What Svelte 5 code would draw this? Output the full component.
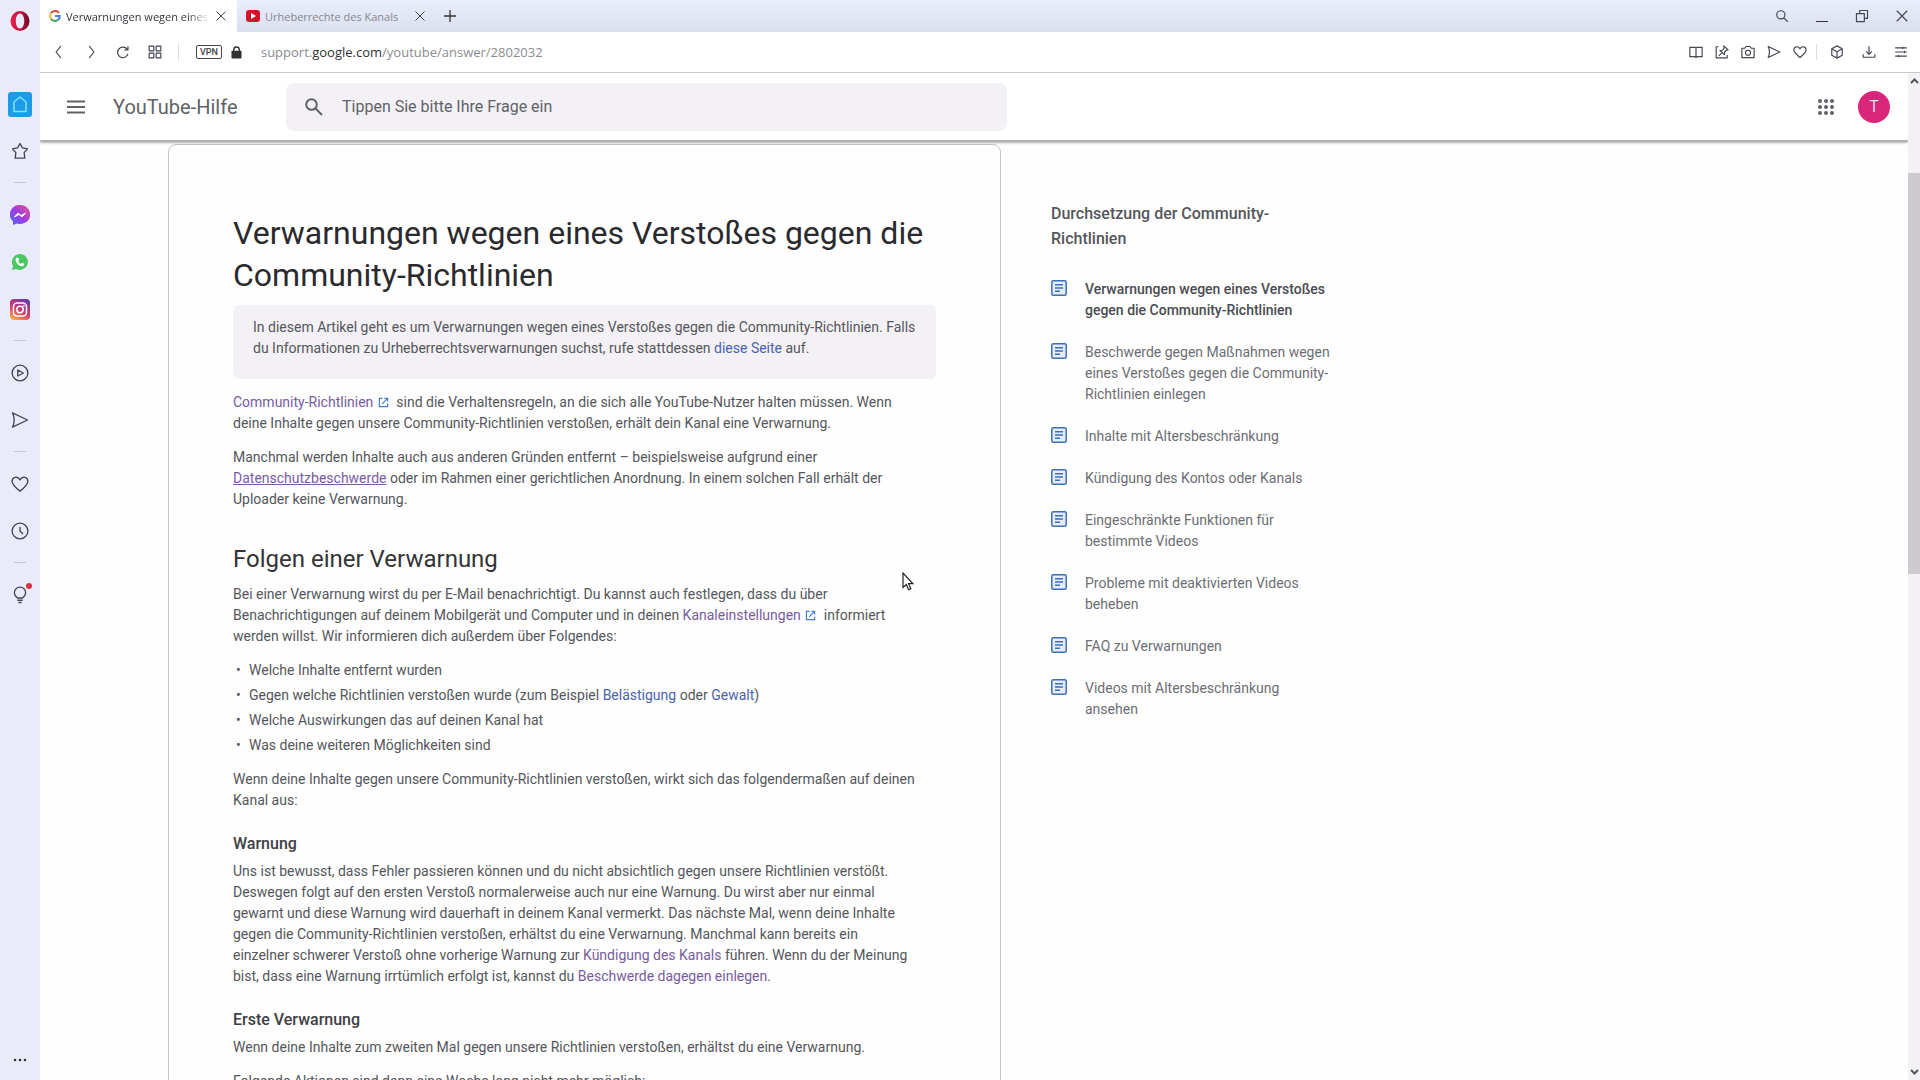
<script lang="ts">
  type IconName = keyof typeof ICONS;

  // 24x24 stroke icons shared by the browser toolbar and the sidebar
  const ICONS = {
    back: 'M15 2l-8 10 8 10',
    forward: 'M9 2l8 10-8 10',
    reload: 'M19.5 8A9 9 0 1 0 20.5 15M20.5 2v6.500h-6.500',
    tiles: 'M2 2h8v8H2zM14 2h8v8h-8zM2 14h8v8H2zM14 14h8v8h-8z',
    search: 'M10 3a7 7 0 1 1 0 14 7 7 0 0 1 0-14zM15 15l7 7',
    restore: 'M2.500 8h13.500v13.500H2.500zM8 8V2.500h13.500V16H16',
    close: 'M3 3l18 18M21 3L3 21',
    book: 'M12 4H1.500v16H10l2 1.500 2-1.500h8.500V4zM12 4v16',
    pin: 'M6 3H2v19h19v-5M15 1.500l7.500 7-3 .500-3 3-.500 4.500L8.500 9.500l4.500-.500 2.500-4zM12 13l-5.500 5.500',
    camera: 'M1.500 5.500h5L8.500 2.500h7l2 3h5v16h-21zM12 9a4.300 4.300 0 1 1 0 8.600A4.300 4.300 0 0 1 12 9z',
    send: 'M2 2.500L22 12 2 21.500Q6.500 12 2 2.500z',
    heart: 'M12 21.500C5 16 1.500 12.500 1.500 8.300 1.500 2.500 9 1 12 6.500 15 1 22.500 2.500 22.500 8.300 22.500 12.500 19 16 12 21.500z',
    cube: 'M12 1.500l9 5v11l-9 5-9-5v-11zM3 6.500l9 5 9-5M12 11.500v11',
    download: 'M12 2v14M7 11l5 5 5-5M2 16v5h20v-5',
    sliders: 'M2 5h20M2 12h20M2 19h20M15 3v4M18 10v4M8 17v4',
    star: 'M12 2l3.300 5.800 6.700 1.400-4.500 5 1 7.300H5.500l1-7.300-4.500-5 6.700-1.400z',
    play: 'M12 1.500a10.500 10.500 0 1 1 0 21 10.500 10.500 0 0 1 0-21zM9 8l7.500 4L9 16z',
    clock: 'M12 1.500a10.500 10.500 0 1 1 0 21 10.500 10.500 0 0 1 0-21zM12 6.500V12l4 4',
    bulb: 'M8.500 16C6 14 4.500 12 4.500 9a7.500 7.500 0 0 1 15 0c0 3-1.500 5-4 7zM8.500 19h7M10 22h4',
  };

  const navIcons: [IconName, string][] = [
    ['back', 'Zurück'],
    ['forward', 'Vorwärts'],
    ['reload', 'Neu laden'],
    ['tiles', 'Schnellwahl'],
  ];

  const pageIcons: [IconName, string][] = [
    ['book', 'Lesemodus'],
    ['pin', 'Anheften'],
    ['camera', 'Schnappschuss'],
    ['send', 'My Flow'],
    ['heart', 'Lesezeichen'],
  ];

  const menuIcons: [IconName, string][] = [
    ['cube', 'Erweiterungen'],
    ['download', 'Downloads'],
    ['sliders', 'Einstellungen'],
  ];

  const related = [
    'Verwarnungen wegen eines Verstoßes gegen die Community-Richtlinien',
    'Beschwerde gegen Maßnahmen wegen eines Verstoßes gegen die Community-Richtlinien einlegen',
    'Inhalte mit Altersbeschränkung',
    'Kündigung des Kontos oder Kanals',
    'Eingeschränkte Funktionen für bestimmte Videos',
    'Probleme mit deaktivierten Videos beheben',
    'FAQ zu Verwarnungen',
    'Videos mit Altersbeschränkung ansehen',
  ];
</script>

{#snippet icon(name: IconName)}
  <svg class="icon" viewBox="0 0 24 24" aria-hidden="true"><path d={ICONS[name]} /></svg>
{/snippet}

{#snippet external()}
  <svg class="external" viewBox="0 0 24 24" aria-hidden="true">
    <path d="M10 3H3v18h18v-7M14 3h7v7M21 3L9 15" />
  </svg>
{/snippet}

<div class="browser">
  <nav class="rail" aria-label="Seitenleiste">
    <button class="opera" aria-label="Opera">
      <svg width="20" height="26" viewBox="0 0 20 26">
        <defs>
          <linearGradient id="opera" x1="0" x2="1">
            <stop offset="0" stop-color="#e8204f" />
            <stop offset="0.55" stop-color="#c2143f" />
            <stop offset="1" stop-color="#6d0a25" />
          </linearGradient>
        </defs>
        <path
          fill="url(#opera)"
          fill-rule="evenodd"
          d="M10 3a9.500 10 0 1 1 0 20 9.500 10 0 0 1 0-20zM10 5.500c-2.500 0-4.200 3.200-4.200 7.500s1.700 7.500 4.200 7.500 4.200-3.200 4.200-7.500-1.700-7.500-4.200-7.500z"
        />
      </svg>
    </button>
    <button class="home" aria-label="Startseite">
      <svg width="24" height="25" viewBox="0 0 24 25">
        <path d="M6 19.500V10l6-5 6 5v9.500z" fill="none" stroke="#7fe3ff" stroke-width="1.500" stroke-linejoin="round" />
      </svg>
    </button>
    <button aria-label="Favoriten">{@render icon('star')}</button>
    <hr />
    <button aria-label="Messenger">
      <svg width="20" height="20" viewBox="0 0 20 20">
        <defs>
          <linearGradient id="messenger" x1="0" y1="1" x2="1" y2="0">
            <stop offset="0" stop-color="#4a6cf7" />
            <stop offset="0.5" stop-color="#a03be0" />
            <stop offset="1" stop-color="#e8588a" />
          </linearGradient>
        </defs>
        <path fill="url(#messenger)" d="M10 0a10 9.500 0 1 1-3 18.500L3 20v-3.500A9.500 9.500 0 0 1 10 0z" />
        <path d="M4.500 12l3.500-4 3 2.500L15.500 8 12 12l-3-2.500z" fill="#fff" stroke="#fff" />
      </svg>
    </button>
    <button aria-label="WhatsApp">
      <svg width="18" height="18" viewBox="0 0 18 18">
        <path fill="#4cc764" d="M9 1a8 8 0 1 1-4 15l-4 1 1-4A8 8 0 0 1 9 1z" />
        <path
          fill="#fff"
          d="M6 4.500l1.500.5.700 2-1 1.200c.7 1.300 1.500 2 2.800 2.700l1.200-1.200 2.100 1c0 1.800-1.200 2.700-2.500 2.500C7.500 12.700 5 10 4.600 7c0-1.200.500-2.200 1.400-2.500z"
        />
      </svg>
    </button>
    <button aria-label="Instagram">
      <svg width="20" height="21" viewBox="0 0 20 21">
        <defs>
          <linearGradient id="insta" x1="0.200" y1="1" x2="0.700" y2="0">
            <stop offset="0" stop-color="#f6b04a" />
            <stop offset="0.450" stop-color="#d93a6a" />
            <stop offset="1" stop-color="#6a3aa8" />
          </linearGradient>
        </defs>
        <rect width="20" height="21" rx="4" fill="url(#insta)" />
        <g fill="none" stroke="#fff" stroke-width="1.500">
          <rect x="3.500" y="4" width="13" height="13" rx="3.500" />
          <circle cx="10" cy="10.500" r="3.200" />
          <circle cx="13.800" cy="6.800" r="0.300" />
        </g>
      </svg>
    </button>
    <hr />
    <button aria-label="Player">{@render icon('play')}</button>
    <button aria-label="My Flow">{@render icon('send')}</button>
    <hr />
    <button aria-label="Lesezeichen">{@render icon('heart')}</button>
    <button aria-label="Verlauf">{@render icon('clock')}</button>
    <hr />
    <button class="tips" aria-label="Tipps">{@render icon('bulb')}<span class="dot"></span></button>
    <button class="more" aria-label="Mehr">
      <svg width="14" height="4" viewBox="0 0 14 4" fill="#333">
        <circle cx="2" cy="2" r="1.300" /><circle cx="7" cy="2" r="1.300" /><circle cx="12" cy="2" r="1.300" />
      </svg>
    </button>
  </nav>

  <div class="window">
    <div class="tabs">
      <div class="tab active">
        <svg width="12" height="12" viewBox="0 0 24 24" fill="none" stroke-width="4">
          <path d="M20 5.500A10 10 0 0 0 4 6.500" stroke="#e04a3f" />
          <path d="M4 6.500a10 10 0 0 0 0 11" stroke="#f2b92e" />
          <path d="M4 17.500a10 10 0 0 0 14.500 2" stroke="#3aa757" />
          <path d="M18.500 19.500A9 9 0 0 0 21.500 12H12" stroke="#4a80e8" />
        </svg>
        <span class="tab-title">Verwarnungen wegen eines</span>
        <button aria-label="Tab schließen">{@render icon('close')}</button>
      </div>
      <div class="tab">
        <svg width="14" height="12" viewBox="0 0 14 12">
          <rect width="14" height="12" rx="3" fill="#d3122c" />
          <path d="M5 3l5 3-5 3z" fill="#fff" />
        </svg>
        <span class="tab-title">Urheberrechte des Kanals</span>
        <button aria-label="Tab schließen">{@render icon('close')}</button>
      </div>
      <button class="new-tab" aria-label="Neuer Tab">
        <svg width="12" height="12" viewBox="0 0 12 12"><path d="M6 0v12M0 6h12" stroke="#333" stroke-width="1.300" /></svg>
      </button>
      <div class="window-buttons">
        <button aria-label="Tabs suchen">{@render icon('search')}</button>
        <button aria-label="Minimieren">
          <svg width="12" height="14" viewBox="0 0 12 14"><path d="M0 12.500h12" stroke="#333" /></svg>
        </button>
        <button aria-label="Wiederherstellen">{@render icon('restore')}</button>
        <button aria-label="Schließen">{@render icon('close')}</button>
      </div>
    </div>

    <div class="toolbar">
      <div class="nav-icons">
        {#each navIcons as [name, label]}
          <button aria-label={label}>{@render icon(name)}</button>
        {/each}
      </div>
      <span class="divider"></span>
      <span class="vpn">VPN</span>
      <svg class="lock" width="11" height="13" viewBox="0 0 12 14">
        <rect x="0.500" y="5" width="11" height="8.500" rx="1" fill="#333" />
        <path d="M3 6V4a3 3 0 0 1 6 0v2" fill="none" stroke="#333" stroke-width="1.500" />
      </svg>
      <span class="url">support.<b>google.com</b>/youtube/answer/2802032</span>
      <div class="page-icons">
        {#each pageIcons as [name, label]}
          <button aria-label={label}>{@render icon(name)}</button>
        {/each}
      </div>
      <span class="divider"></span>
      <div class="menu-icons">
        {#each menuIcons as [name, label]}
          <button aria-label={label}>{@render icon(name)}</button>
        {/each}
      </div>
    </div>

    <div class="viewport">
      <div class="page">
        <header>
          <button class="menu" aria-label="Hauptmenü">
            <svg width="18" height="14" viewBox="0 0 18 14">
              <path d="M0 1.500h18M0 7h18M0 12.500h18" stroke="#5f6368" stroke-width="2" />
            </svg>
          </button>
          <a class="brand" href="#hilfe">YouTube-Hilfe</a>
          <form class="search" role="search">
            <svg width="18" height="18" viewBox="0 0 18 18" fill="none" stroke="#5f6368" stroke-width="2">
              <circle cx="6.500" cy="6.500" r="5.300" /><path d="M10.500 10.500l6.500 6.500" />
            </svg>
            <input type="text" aria-label="In der Hilfe suchen" placeholder="Tippen Sie bitte Ihre Frage ein" />
          </form>
          <button class="apps" aria-label="Google-Apps">
            <svg width="16" height="16" viewBox="0 0 16 16" fill="#5f6368">
              {#each [2, 8, 14] as cy}
                {#each [2, 8, 14] as cx}
                  <circle {cx} {cy} r="2" />
                {/each}
              {/each}
            </svg>
          </button>
          <button class="avatar">T</button>
        </header>

        <main>
          <article>
            <h1>Verwarnungen wegen eines Verstoßes gegen die Community-Richtlinien</h1>
            <div class="notice">
              In diesem Artikel geht es um Verwarnungen wegen eines Verstoßes gegen die Community-Richtlinien. Falls
              du Informationen zu Urheberrechtsverwarnungen suchst, rufe stattdessen <a href="#seite">diese Seite</a> auf.
            </div>
            <p>
              <a class="visited" href="#richtlinien">Community-Richtlinien {@render external()}</a>
              sind die Verhaltensregeln, an die sich alle YouTube-Nutzer halten müssen. Wenn<br />
              deine Inhalte gegen unsere Community-Richtlinien verstoßen, erhält dein Kanal eine Verwarnung.
            </p>
            <p>
              Manchmal werden Inhalte auch aus anderen Gründen entfernt – beispielsweise aufgrund einer<br />
              <a class="visited underlined" href="#datenschutz">Datenschutzbeschwerde</a> oder im Rahmen einer gerichtlichen
              Anordnung. In einem solchen Fall erhält der<br />
              Uploader keine Verwarnung.
            </p>

            <h2>Folgen einer Verwarnung</h2>
            <p>
              Bei einer Verwarnung wirst du per E-Mail benachrichtigt. Du kannst auch festlegen, dass du über<br />
              Benachrichtigungen auf deinem Mobilgerät und Computer und in deinen
              <a class="visited" href="#einstellungen">Kanaleinstellungen {@render external()}</a> informiert<br />
              werden willst. Wir informieren dich außerdem über Folgendes:
            </p>
            <ul>
              <li>Welche Inhalte entfernt wurden</li>
              <li>
                Gegen welche Richtlinien verstoßen wurde (zum Beispiel <a href="#belaestigung">Belästigung</a> oder
                <a href="#gewalt">Gewalt</a>)
              </li>
              <li>Welche Auswirkungen das auf deinen Kanal hat</li>
              <li>Was deine weiteren Möglichkeiten sind</li>
            </ul>
            <p>
              Wenn deine Inhalte gegen unsere Community-Richtlinien verstoßen, wirkt sich das folgendermaßen auf deinen<br />
              Kanal aus:
            </p>

            <h3>Warnung</h3>
            <p>
              Uns ist bewusst, dass Fehler passieren können und du nicht absichtlich gegen unsere Richtlinien verstößt.<br />
              Deswegen folgt auf den ersten Verstoß normalerweise auch nur eine Warnung. Du wirst aber nur einmal<br />
              gewarnt und diese Warnung wird dauerhaft in deinem Kanal vermerkt. Das nächste Mal, wenn deine Inhalte<br />
              gegen die Community-Richtlinien verstoßen, erhältst du eine Verwarnung. Manchmal kann bereits ein<br />
              einzelner schwerer Verstoß ohne vorherige Warnung zur
              <a class="visited" href="#kuendigung">Kündigung des Kanals</a> führen. Wenn du der Meinung<br />
              bist, dass eine Warnung irrtümlich erfolgt ist, kannst du
              <a class="visited" href="#beschwerde">Beschwerde dagegen einlegen</a>.
            </p>

            <h3>Erste Verwarnung</h3>
            <p>Wenn deine Inhalte zum zweiten Mal gegen unsere Richtlinien verstoßen, erhältst du eine Verwarnung.</p>
            <p>Folgende Aktionen sind dann eine Woche lang nicht mehr möglich:</p>
          </article>

          <aside>
            <h4>Durchsetzung der Community-Richtlinien</h4>
            {#each related as title, i}
              <a class="related" class:current={i === 0} href="#artikel-{i}">
                <svg width="16" height="16" viewBox="0 0 16 16" fill="none" stroke="#3f6fb5" stroke-width="1.500">
                  <rect x="0.800" y="0.800" width="14.400" height="14.400" rx="1.500" fill="#e3edfb" />
                  <path d="M4 4.700h8M4 8h8M4 11.300h5" />
                </svg>
                <span>{title}</span>
              </a>
            {/each}
          </aside>
        </main>
      </div>

      <div class="scrollbar">
        <svg width="9" height="6" viewBox="0 0 9 6"><path d="M1 5l3.500-3.500L8 5" /></svg>
        <div class="track"><div class="thumb"></div></div>
        <svg width="9" height="6" viewBox="0 0 9 6"><path d="M1 1l3.500 3.500L8 1" /></svg>
      </div>
    </div>
  </div>

  <svg class="cursor" width="12" height="19" viewBox="0 0 12 19">
    <path d="M1 1v14.500l3.300-3 2.300 5.200 2.200-1-2.200-5h4.300z" fill="#fff" stroke="#222" stroke-width="1.200" />
  </svg>
</div>

<style>
  :global(body) {
    margin: 0;
    overflow: hidden;
  }

  .browser {
    display: flex;
    height: 100vh;
    position: relative;
    overflow: hidden;
    background: #fefefe;
    font-family: Roboto, 'Liberation Sans', sans-serif;
    color: #54565b;
  }

  button {
    display: flex;
    align-items: center;
    justify-content: center;
    padding: 0;
    border: 0;
    background: none;
    font: inherit;
    flex-shrink: 0;
  }

  a {
    color: #4a62ac;
    text-decoration: none;
  }

  a.visited { color: #775c9e; }
  a.underlined { text-decoration: underline; }

  .icon {
    width: 14px;
    height: 14px;
    fill: none;
    stroke: #444750;
    stroke-width: 2;
    stroke-linejoin: round;
  }

  /* Sidebar */
  .rail {
    display: flex;
    flex-direction: column;
    align-items: center;
    gap: 15px;
    width: 40px;
    flex-shrink: 0;
    box-sizing: border-box;
    padding: 5px 0 4px;
    background: #eaebf9;
  }

  .rail button {
    width: 32px;
    height: 32px;
  }

  .rail .icon {
    width: 18px;
    height: 18px;
    stroke-width: 1.8;
  }

  .rail .opera { margin-bottom: 36px; }

  .rail .home svg {
    border-radius: 3px;
    background: #1c9ce6;
  }

  .rail hr {
    width: 12px;
    height: 1px;
    margin: 0;
    border: 0;
    border-top: 1px solid #c3c5d2;
  }

  .rail .tips { position: relative; }

  .dot {
    position: absolute;
    top: 4px;
    right: 4px;
    width: 6px;
    height: 6px;
    border-radius: 50%;
    background: #d5333f;
  }

  .rail .more { margin-top: auto; }

  .window {
    display: flex;
    flex-direction: column;
    flex: 1;
    min-width: 0;
  }

  /* Tab strip */
  .tabs {
    display: flex;
    height: 32px;
    flex-shrink: 0;
    background: linear-gradient(#e9eefb, #dcdfee);
    font: 11px 'Open Sans', 'Noto Sans', sans-serif;
  }

  .tab {
    display: flex;
    align-items: center;
    gap: 5px;
    width: 199px;
    box-sizing: border-box;
    padding: 0 10px 0 9px;
    color: #85878f;
  }

  .tab .icon {
    width: 12px;
    height: 12px;
  }

  .tab svg { flex-shrink: 0; }

  .active {
    width: 197px;
    background: #fff;
    color: #33353a;
  }

  .tab-title {
    flex: 1;
    overflow: hidden;
    white-space: nowrap;
  }

  .active .tab-title { mask-image: linear-gradient(to right, #000 85%, transparent); }

  .new-tab {
    width: 28px;
    height: 32px;
  }

  .window-buttons {
    display: flex;
    margin: 0 -2px 0 auto;
  }

  .window-buttons button {
    width: 40px;
    height: 32px;
  }

  /* Address bar */
  .toolbar {
    display: flex;
    align-items: center;
    height: 40px;
    flex-shrink: 0;
    border-bottom: 1px solid #c8c8cc;
    background: #fff;
  }

  .nav-icons { display: flex; margin: 0 7px 0 3px; }
  .nav-icons button { width: 32px; height: 32px; }

  .divider {
    width: 1px;
    height: 16px;
    background: #dcdce0;
  }

  .vpn {
    margin: 0 9px 0 17px;
    padding: 0 3px;
    border: 1px solid #444;
    border-radius: 2px;
    font-size: 9px;
    font-weight: 500;
    line-height: 12px;
    color: #444;
  }

  .url {
    flex: 1;
    margin-left: 19px;
    font: 13px 'Open Sans', 'Noto Sans', sans-serif;
    color: #8a8c92;
  }

  .url b { font-weight: 400; color: #303238; }

  .page-icons { display: flex; margin-right: 3px; }
  .page-icons button { width: 26px; height: 32px; }
  .menu-icons { display: flex; margin: 0 3px 0 4px; }
  .menu-icons button { width: 32px; height: 32px; }

  .viewport {
    display: flex;
    flex: 1;
    min-height: 0;
  }

  .page {
    flex: 1;
    min-width: 0;
    overflow: hidden;
  }

  /* Help centre header */
  header {
    display: flex;
    align-items: center;
    height: 67px;
    position: relative;
    background: #fff;
    border-bottom: 1px solid #b4b4b8;
    box-shadow: 0 1px 3px #77777f;
  }

  .menu { margin-left: 27px; width: 18px; }

  .brand {
    margin-left: 28px;
    width: 173px;
    font-size: 20px;
    color: #5f6368;
  }

  .search {
    display: flex;
    align-items: center;
    gap: 19px;
    flex: 0 1 721px;
    height: 48px;
    box-sizing: border-box;
    padding: 0 19px;
    border-radius: 8px;
    background: #f3f1f5;
  }

  .search input {
    flex: 1;
    border: 0;
    padding: 0;
    outline: 0;
    background: none;
    font: inherit;
    font-size: 16px;
  }

  .search input::placeholder { color: #5f6368; }

  .apps { margin-left: auto; }

  .avatar {
    width: 32px;
    height: 32px;
    margin: 0 18px 0 24px;
    border-radius: 50%;
    background: #d9267a;
    color: #fbd9e9;
    font-size: 16px;
  }

  /* Article */
  main {
    display: flex;
    align-items: flex-start;
    gap: 50px;
    padding: 3px 24px 0 128px;
  }

  article {
    flex: 0 1 833px;
    box-sizing: border-box;
    padding: 67px 64px 40px;
    border: 1px solid #c4c5c9;
    border-radius: 8px;
    font-size: 14px;
    line-height: 21px;
  }

  h1 {
    margin: 0 0 9px;
    font-size: 32px;
    font-weight: 400;
    line-height: 42px;
    color: #2a2a2e;
  }

  .notice {
    margin-bottom: 13px;
    padding: 12px 4px 20px 20px;
    border-radius: 6px;
    background: #f3f1f5;
  }

  p { margin: 0 0 13px; }

  .external {
    width: 11px;
    height: 11px;
    margin: 0 4px 0 1px;
    fill: none;
    stroke: #3f7fc8;
    stroke-width: 2.5;
    vertical-align: -1px;
  }

  h2 {
    margin: 33px 0 9px;
    font-size: 24px;
    font-weight: 400;
    line-height: 32px;
    color: #333438;
  }

  h3 {
    margin: 21px 0 5px;
    font-size: 16px;
    font-weight: 500;
    line-height: 24px;
    color: #3f4045;
  }

  ul {
    margin: 0 0 13px;
    padding: 0;
    list-style: none;
  }

  li {
    display: block;
    margin-bottom: 4px;
  }

  li::before {
    content: '•';
    display: inline-block;
    width: 13px;
    padding-left: 3px;
  }

  /* Related articles */
  aside {
    flex: 0 0 282px;
    padding-top: 57px;
  }

  h4 {
    margin: 0 0 28px;
    font-size: 16px;
    font-weight: 500;
    line-height: 25px;
  }

  .related {
    display: flex;
    gap: 18px;
    margin-bottom: 21px;
    font-size: 14px;
    line-height: 21px;
    color: #6c6e74;
  }

  .related svg { flex-shrink: 0; margin-top: 1px; }

  .related.current {
    font-weight: 500;
    color: #4a4b50;
  }

  /* Scrollbar */
  .scrollbar {
    display: flex;
    flex-direction: column;
    align-items: center;
    gap: 4px;
    width: 12px;
    box-sizing: border-box;
    padding: 5px 0;
    background: #f3f1f4;
  }

  .scrollbar svg {
    fill: none;
    stroke: #55565a;
    stroke-width: 2;
    flex-shrink: 0;
  }

  .track {
    flex: 1;
    width: 100%;
    padding-top: 85px;
    box-sizing: border-box;
  }

  .thumb {
    height: 45%;
    background: #cdcbd0;
  }

  .cursor {
    position: absolute;
    left: 902px;
    top: 572px;
  }
</style>
